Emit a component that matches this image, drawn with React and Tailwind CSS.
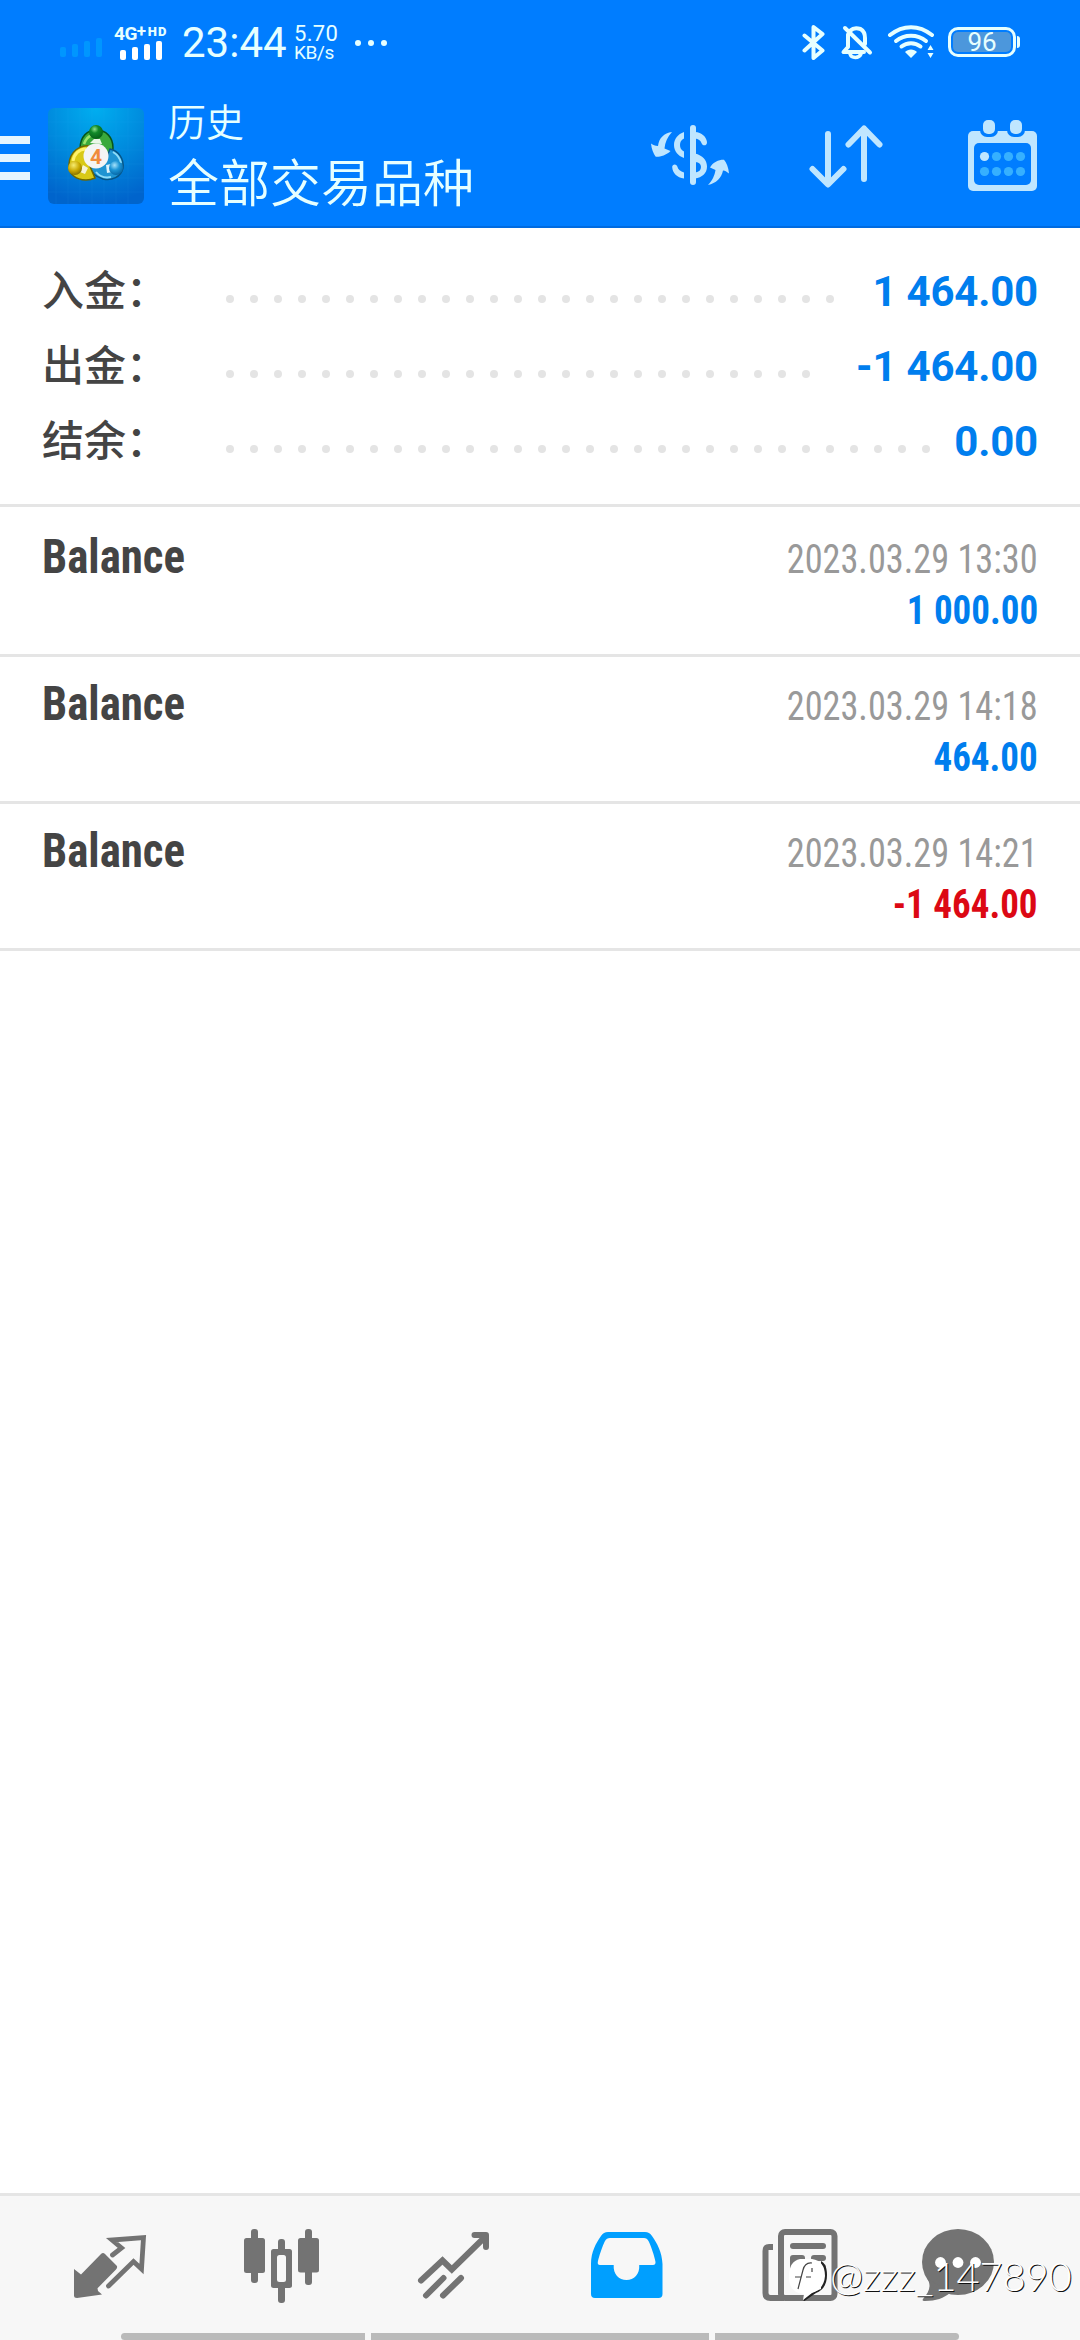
const summary = [
  { label: '入金：', value: '1 464.00', dots: 26 },
  { label: '出金：', value: '-1 464.00', dots: 25 },
  { label: '结余：', value: '0.00', dots: 30 },
];

const deals = [
  { name: 'Balance', time: '2023.03.29 13:30', amount: '1 000.00', color: 'text-[#007eee]' },
  { name: 'Balance', time: '2023.03.29 14:18', amount: '464.00', color: 'text-[#007eee]' },
  { name: 'Balance', time: '2023.03.29 14:21', amount: '-1 464.00', color: 'text-[#dc0814]' },
];

const SignalBars = ({ className }) => (
  <div className={`flex items-end gap-[6px] ${className}`}>
    <span className="w-[6px] h-[10px] rounded-[2px] bg-current" />
    <span className="w-[6px] h-[13px] rounded-[2px] bg-current" />
    <span className="w-[6px] h-[16px] rounded-[2px] bg-current" />
    <span className="w-[6px] h-[19px] rounded-[2px] bg-current" />
  </div>
);

const StatusIcons = () => (
  <svg className="w-[132px] h-[44px]" viewBox="802 20 132 44" fill="none" stroke="#e6ffff" strokeLinecap="round" strokeLinejoin="round">
    {/* Bluetooth */}
    <path d="M804.5 35.5L822.5 50.5L813.5 58V27L822.5 34L804.5 50.5" strokeWidth="4" />
    {/* Muted bell */}
    <path d="M848 34.5V47L843.5 52H864M850.5 30.5C853 28 857 28 860.5 29C864 31 865 34 865 38V44" strokeWidth="4" />
    <path d="M845 28L870 52.5" strokeWidth="4" />
    <path d="M850 54C851.500 58.500 859 58.500 861 54" strokeWidth="3.500" />
    {/* Wi-Fi */}
    <path d="M890 35C903 24.500 919 24.500 932 35" strokeWidth="4" />
    <path d="M896 41C904.500 34 917.500 34 926 41" strokeWidth="4" />
    <path d="M901.500 46.500C907 42 915 42 920.500 46.500" strokeWidth="4" />
    <path d="M905 52C908 48.500 914 48.500 917 52L911 58Z" fill="#e6ffff" stroke="none" />
    <path d="M927.500 50L930.500 45L933.500 50ZM927.500 53L930.500 58L933.500 53Z" fill="#e6ffff" stroke="none" />
  </svg>
);

const AppLogo = () => (
  <svg className="w-24 h-24 ml-[18px]" viewBox="0 0 96 96">
    <defs>
      <radialGradient id="tile" cx="0.5" cy="0" r="1">
        <stop offset="0" stopColor="#00aef0" />
        <stop offset="0.55" stopColor="#0088dc" />
        <stop offset="1" stopColor="#0064cc" />
      </radialGradient>
      <radialGradient id="green" cx="0.4" cy="0.3" r="0.7">
        <stop offset="0" stopColor="#8fe08a" />
        <stop offset="0.4" stopColor="#128a2a" />
        <stop offset="1" stopColor="#056018" />
      </radialGradient>
      <radialGradient id="yellow" cx="0.4" cy="0.3" r="0.7">
        <stop offset="0" stopColor="#f6ec70" />
        <stop offset="0.6" stopColor="#c9a800" />
        <stop offset="1" stopColor="#8a7400" />
      </radialGradient>
      <radialGradient id="blue" cx="0.4" cy="0.3" r="0.7">
        <stop offset="0" stopColor="#a6e2fa" />
        <stop offset="0.5" stopColor="#1d96d6" />
        <stop offset="1" stopColor="#0668a8" />
      </radialGradient>
    </defs>
    <rect width="96" height="96" rx="6" fill="url(#tile)" />
    <path d="M8 0V96M20 0V96M32 0V96M44 0V96M56 0V96M68 0V96M80 0V96M0 14H96M0 28H96M0 42H96M0 56H96M0 70H96M0 84H96" stroke="#40b8ff" strokeOpacity="0.08" />
    {/* Green figure */}
    <path d="M32 41C32 28 40 22 48 22C58 22 65 29 65 40C65 46 62 50 58 54L48 44Z" fill="#3aa93c" stroke="#08561a" strokeWidth="1.500" />
    <path d="M36 36C38 30 41 28 44 27" stroke="#9be36c" strokeWidth="2.500" fill="none" />
    <path d="M42 35L46 31H52L54 36Z" fill="#eaf7e8" />
    {/* Blue figure */}
    <path d="M62 41C71 43 76 51 75 60C73 69 64 73 55 71C48 69 43 64 42 58L56 56Z" fill="#1f94d2" stroke="#075585" strokeWidth="1.500" />
    <path d="M65 44C70 47 72 50 73 55M48 64C52 69 58 70 63 69" stroke="#8edcf8" strokeWidth="2" fill="none" />
    <path d="M58 57L63 56L64 64L59 65Z" fill="#def2fb" />
    {/* Yellow figure */}
    <path d="M44 38C31 36 22 44 21 56C20 66 28 72 38 72C42 72 45 71 47 70L40 54Z" fill="#d9c916" stroke="#6f6800" strokeWidth="1.500" />
    <path d="M25 53C26 46 31 41 38 41" stroke="#fff26a" strokeWidth="3" fill="none" />
    <path d="M35 57L40 60L37 66L32 64Z" fill="#f6f3d4" />
    <circle cx="48" cy="24" r="7" fill="url(#green)" />
    <circle cx="27" cy="60" r="7" fill="url(#yellow)" />
    <circle cx="68" cy="60" r="7" fill="url(#blue)" />
    <circle cx="48" cy="48" r="12.500" fill="#f4f4f4" />
    <text x="48" y="55.500" textAnchor="middle" fontSize="21" fontWeight="700" fill="#f08c3c" fontFamily="Roboto, sans-serif">4</text>
  </svg>
);

const CurrencyIcon = () => (
  <svg className="w-[78px] h-[66px]" viewBox="651 121 78 66" fill="#bfe6ff">
    <rect x="690" y="124" width="6" height="60" rx="3" />
    <path d="M684 131C678 133 674 138 674 144C674 150 678 155 684 157V150.500C681 149 680 147 680 144C680 141 681 139 684 137.500Z" />
    <path d="M672.200 166C672.200 162.500 677 162.500 677.500 166C678 168.500 680.500 170.500 684 171.500V177.500C677 176.500 672.500 172 672.200 166Z" />
    <path d="M695 131C702 131.500 706 135.500 707 141C707.300 145 702.500 145.500 701.500 142C700.500 139.500 698.500 138 695 137.500Z" />
    <path fillRule="evenodd" d="M695 152.500C702.500 154.500 707 159 707 165.500C707 172.500 702 176.500 695 177.500ZM695.500 161C699 161.500 701 163 701 166C701 169 699 171 695.500 171.500Z" />
    <path d="M672 131C664 132 659 137 658 145C655 145 653 144 651 142.500C651.500 148 653.500 152.500 655.500 155.500C657 156.500 666 155 670.500 150L664.500 147.500C665 141 667.500 136 672 131Z" />
    <path d="M708 184C716 182 721.500 177.500 723 169.500C725.500 169.500 727 171 729 172.500C728.500 166.500 726.500 161.500 724 158.700C719 158.500 713 161 710 166.500L715.500 169C714.500 175 712.500 179 708 184Z" />
  </svg>
);

const SortIcon = () => (
  <svg className="w-[74px] h-[66px]" viewBox="809 121 74 66" fill="none" stroke="#bfe6ff" strokeWidth="6" strokeLinecap="round" strokeLinejoin="round">
    <path d="M828 133V183M812.500 168L828 183.500L843.500 168" />
    <path d="M864 178V128M848.500 143.500L864 127.500L879.500 143.500" />
  </svg>
);

const CalendarIcon = () => (
  <svg className="w-[70px] h-[74px]" viewBox="968 117 70 74">
    <rect x="968" y="130" width="69" height="60" rx="5" fill="#bfe6ff" />
    <rect x="974" y="142" width="57" height="42" rx="5" fill="#007dff" />
    <rect x="980" y="116" width="18" height="20" rx="7" fill="#007dff" />
    <rect x="1007" y="116" width="18" height="20" rx="7" fill="#007dff" />
    <rect x="983" y="119" width="12" height="14" rx="5" fill="#bfe6ff" />
    <rect x="1010" y="119" width="12" height="14" rx="5" fill="#bfe6ff" />
    <circle cx="984.500" cy="155.500" r="4.600" fill="#bfe6ff" />
    <g fill="#36b0ff">
      <circle cx="996.500" cy="155.500" r="4.600" />
      <circle cx="1008.500" cy="155.500" r="4.600" />
      <circle cx="1020.500" cy="155.500" r="4.600" />
      <circle cx="984.500" cy="170.500" r="4.600" />
      <circle cx="996.500" cy="170.500" r="4.600" />
      <circle cx="1008.500" cy="170.500" r="4.600" />
      <circle cx="1020.500" cy="170.500" r="4.600" />
    </g>
  </svg>
);

const QuotesIcon = () => (
  <svg className="w-20 h-20" viewBox="70 2226 80 80">
    <path d="M74 2269L81 2274.500L101 2254Q103 2252 105 2254L116.500 2265.500Q118 2267.300 116 2269.500L97.500 2288.300L98 2291L102 2294.500L77 2298Q74 2298 74 2295.500Z" fill="#737373" />
    <path d="M112.500 2255L121.500 2248L112 2240L143.500 2237.700L141.500 2269L133.500 2261.500L108.500 2286" fill="none" stroke="#737373" strokeWidth="4.800" strokeLinejoin="miter" strokeLinecap="round" />
  </svg>
);

const ChartIcon = () => (
  <svg className="w-20 h-20" viewBox="242 2226 80 80" fill="#737373">
    <rect x="251" y="2229" width="7" height="54" rx="3" />
    <rect x="244" y="2238" width="21" height="35" rx="2.500" />
    <rect x="305" y="2229" width="7" height="56" rx="3" />
    <rect x="298" y="2238" width="21" height="34.500" rx="2.500" />
    <rect x="278" y="2239" width="7" height="64" rx="3" />
    <rect x="271" y="2249" width="21" height="39" rx="2.500" />
    <rect x="277" y="2255" width="9" height="27" rx="2.500" fill="#f7f7f7" />
  </svg>
);

const TradeIcon = () => (
  <svg className="w-20 h-20" viewBox="414 2226 80 80" fill="none" stroke="#737373" strokeWidth="6">
    <path d="M421 2280.500L442.500 2260.500L451.800 2269.500L485 2237" strokeLinecap="round" />
    <path d="M474.500 2235H486V2247" strokeLinecap="round" strokeLinejoin="round" />
    <path d="M426 2295.500L443.500 2278M443 2295.500L461 2278" strokeLinecap="round" />
  </svg>
);

const HistoryIcon = () => (
  <svg className="w-20 h-20" viewBox="586 2226 80 80">
    <path d="M608 2232H645Q649.500 2232 652 2236C657 2243 662 2252 662.500 2264V2294Q662.500 2298 658.500 2298H595Q591 2298 591 2294V2264C591 2252 596 2243 601 2236Q603.500 2232 608 2232Z" fill="#009fff" />
    <path d="M610 2238H644Q647 2238 648.500 2241C651 2246 654.500 2256 655.500 2262Q655.700 2265 653 2265H639.200C640 2274 634 2280 626.500 2280C619 2280 613 2274 613.700 2265H600Q597.300 2265 597.800 2262C599 2256 602.500 2246 605 2241Q606.500 2238 610 2238Z" fill="#f7f7f7" />
  </svg>
);

const NewsIcon = () => (
  <svg className="w-20 h-20" viewBox="760 2226 80 80">
    <path d="M773 2247H769Q765.500 2247 765.500 2251V2293Q765.500 2298 770.500 2298H784" fill="none" stroke="#737373" strokeWidth="6" />
    <rect x="781" y="2232" width="53.500" height="66" rx="4" fill="#f7f7f7" stroke="#737373" strokeWidth="6" />
    <g fill="#737373">
      <rect x="790" y="2243" width="36" height="6" rx="3" />
      <rect x="790" y="2255" width="15" height="15" rx="3" />
      <rect x="811" y="2255" width="15" height="6" rx="3" />
      <rect x="811" y="2264" width="15" height="6" rx="3" />
      <rect x="811" y="2273" width="15" height="6" rx="3" />
    </g>
  </svg>
);

const ChatIcon = () => (
  <svg className="w-20 h-20" viewBox="918 2226 80 80">
    <ellipse cx="958" cy="2262" rx="36" ry="33" fill="#737373" />
    <path d="M927 2278C932 2286 929 2292 923 2299C922 2300.500 923 2301 925 2301C936 2301 944 2298 950 2293Z" fill="#737373" />
    <circle cx="940.500" cy="2262.500" r="5.400" fill="#fff" />
    <circle cx="958" cy="2262.500" r="5.400" fill="#fff" />
    <circle cx="975.500" cy="2262.500" r="5.400" fill="#fff" />
  </svg>
);

const Header = () => (
  <header className="h-[228px] bg-[#007dff] border-b-2 border-[#006be0] text-[#e6ffff]">
    {/* Status bar */}
    <div className="flex items-center h-[86px] pl-[60px] font-[Roboto,sans-serif]">
      <SignalBars className="text-[#0096ff] pt-[9px]" />
      <div className="flex flex-col ml-3 w-[68px] pb-[1px]">
        <div className="flex font-bold leading-[15px] h-[15px] whitespace-nowrap">
          <span className="text-[19px] tracking-[-0.5px]">4G</span>
          <span className="text-[17px] leading-[10px] w-[11px]">+</span>
          <span className="text-[13px] leading-[11px] font-black tracking-[1px]">HD</span>
        </div>
        <SignalBars className="ml-[6px] text-white" />
      </div>
      <span className="w-[112px] text-[42px] leading-[48px] whitespace-nowrap">23:44</span>
      <div className="flex flex-col w-[61px] text-[22px] leading-[19px]">
        <span className="tracking-[0.3px]">5.70</span>
        <span className="text-[19px] tracking-[-0.4px]">KB/s</span>
      </div>
      <div className="flex gap-[7px]">
        <span className="w-[6px] h-[6px] rounded-full bg-current" />
        <span className="w-[6px] h-[6px] rounded-full bg-current" />
        <span className="w-[6px] h-[6px] rounded-full bg-current" />
      </div>
      <div className="flex items-center ml-auto mr-[60px] pb-[2px]">
        <StatusIcons />
        <div className="flex items-center ml-[14px]">
          <div className="w-[68px] h-[30px] border-[3px] border-current rounded-[10px] p-[2px]">
            <div className="flex items-center justify-center w-[58px] h-[20px] rounded-[5px] bg-[#4c97dc] text-[26px]">96</div>
          </div>
          <span className="w-[3px] h-3 ml-[1px] rounded-r-full bg-current" />
        </div>
      </div>
    </div>

    {/* Toolbar */}
    <div className="flex items-center h-[140px]">
      <div className="flex flex-col gap-[10px] w-[30px] pt-1">
        <span className="h-2 bg-[#e6f6ff]" />
        <span className="h-2 bg-[#e6f6ff]" />
        <span className="h-2 bg-[#e6f6ff]" />
      </div>
      <AppLogo />
      <div className="flex flex-col ml-6 pb-[2px] font-[350] font-['Noto_Sans_CJK_SC',sans-serif]">
        <span className="text-[38px] leading-[50px]">历史</span>
        <span className="text-[51px] leading-[70px]">全部交易品种</span>
      </div>
      <div className="flex items-center ml-auto mr-[42px] pb-[3px]">
        <CurrencyIcon />
        <div className="ml-20"><SortIcon /></div>
        <div className="ml-[85px]"><CalendarIcon /></div>
      </div>
    </div>
  </header>
);

const Summary = () => (
  <section className="h-[279px] pt-[25px] border-b-[3px] border-[#e5e5e5]">
    {summary.map((row) => (
      <div key={row.label} className="flex items-center h-[75px] px-[42px]">
        <span className="w-[184px] pb-[6px] text-[42px] leading-[69px] font-medium text-[#444] font-['Noto_Sans_CJK_SC',sans-serif]">
          {row.label}
        </span>
        <div className="flex gap-4 pt-[17px]">
          {Array.from({ length: row.dots }, (_, i) => (
            <span key={i} className="w-2 h-2 rounded-full bg-[#e4e4e4]" />
          ))}
        </div>
        <span className="ml-auto pt-[2px] text-[42px] leading-[73px] font-bold text-[#007eee] font-[Roboto,sans-serif] tracking-[-0.2px] whitespace-nowrap">
          {row.value}
        </span>
      </div>
    ))}
  </section>
);

const DealRow = ({ deal }) => (
  <div className="flex justify-between h-[147px] px-[42px] pt-[19px] border-b-[3px] border-[#e5e5e5] font-['Roboto_Condensed',Roboto,sans-serif] [font-stretch:75%]">
    <span className="text-[48px] leading-[56px] font-bold text-[#444] origin-left scale-x-[0.935]">{deal.name}</span>
    <div className="flex flex-col items-end whitespace-nowrap">
      <span className="text-[40px] leading-[62px] text-[#999] origin-right scale-x-[0.907]">{deal.time}</span>
      <span className={`text-[40px] leading-[40px] font-bold origin-right scale-x-[0.925] ${deal.color}`}>{deal.amount}</span>
    </div>
  </div>
);

const Watermark = () => (
  <div className="absolute left-[788px] top-[2251px] flex">
    <svg className="w-[42px] h-[50px]" viewBox="788 2252 42 50">
      <path d="M803 2303L816 2294C824 2291 827 2284 827 2276C827 2269 825 2264 821 2262V2290L806 2296Z" fill="#222" />
      <path d="M800 2260H812Q825 2262 825 2277Q824 2290 812 2294L803 2301L804 2295Q789 2294 789 2278Q789 2262 800 2260Z" fill="#fff" />
      <path d="M812 2264Q805 2263 803 2271L798 2290M795 2278H801M806 2278H811M812 2273V2269" fill="none" stroke="#444" strokeWidth="1.200" />
    </svg>
    <span className="text-[40px] leading-[50px] font-light tracking-[-0.2px] text-white font-[Lato,sans-serif] [text-shadow:1px_1px_0_#111]">
      @zzz_147890
    </span>
  </div>
);

const BottomNav = () => (
  <nav className="flex flex-col justify-between h-[147px] bg-[#f7f7f7] border-t-[3px] border-[#e5e5e5]">
    <div className="flex pl-[70px] pt-[30px]">
      <QuotesIcon />
      <div className="ml-[92px]"><ChartIcon /></div>
      <div className="ml-[92px]"><TradeIcon /></div>
      <div className="ml-[92px]"><HistoryIcon /></div>
      <div className="ml-[94px]"><NewsIcon /></div>
      <div className="ml-[78px]"><ChatIcon /></div>
    </div>
    {/* System gesture bar */}
    <div className="flex gap-[6px] pl-[121px]">
      <span className="w-[244px] h-[7px] rounded-l-full bg-[#bababa]" />
      <span className="w-[338px] h-[7px] bg-[#bababa]" />
      <span className="w-[244px] h-[7px] rounded-r-full bg-[#bababa]" />
    </div>
  </nav>
);

const App = () => {
  return (
    <div className="relative flex flex-col w-[1080px] h-[2340px] overflow-hidden bg-white">
      <Header />
      <Summary />
      <main className="flex-1 pt-[3px]">
        {deals.map((deal) => (
          <DealRow key={deal.time} deal={deal} />
        ))}
      </main>
      <BottomNav />
      <Watermark />
    </div>
  );
};

export default App;
